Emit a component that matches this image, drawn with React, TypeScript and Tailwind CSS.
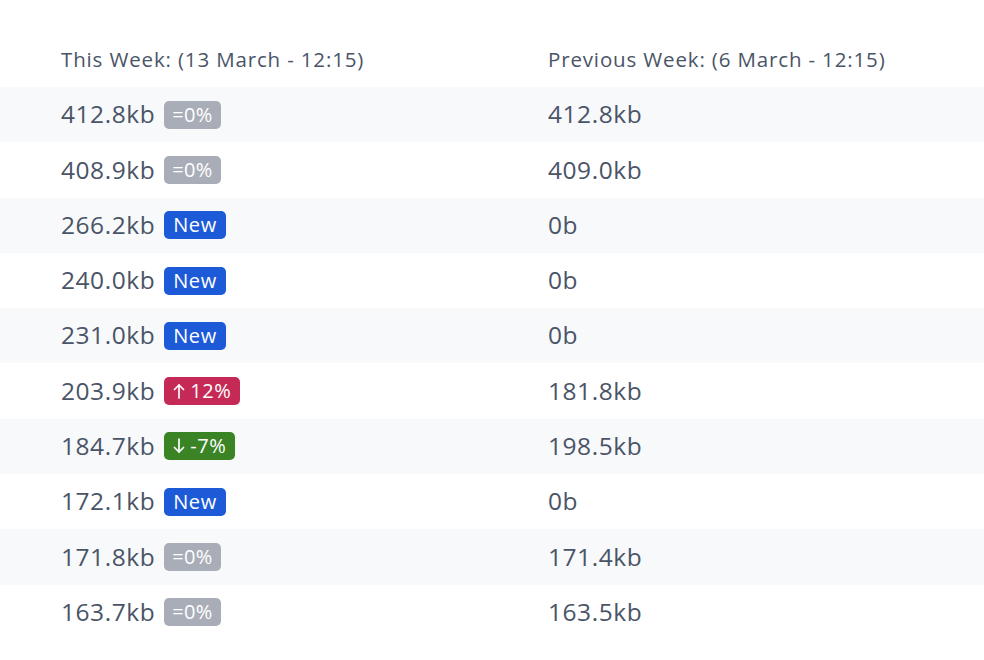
type Change =
  | { kind: 'same' }
  | { kind: 'new' }
  | { kind: 'up'; pct: number }
  | { kind: 'down'; pct: number }

type Row = { current: string; previous: string; change: Change }

const ROWS: Row[] = [
  { current: '412.8kb', previous: '412.8kb', change: { kind: 'same' } },
  { current: '408.9kb', previous: '409.0kb', change: { kind: 'same' } },
  { current: '266.2kb', previous: '0b', change: { kind: 'new' } },
  { current: '240.0kb', previous: '0b', change: { kind: 'new' } },
  { current: '231.0kb', previous: '0b', change: { kind: 'new' } },
  { current: '203.9kb', previous: '181.8kb', change: { kind: 'up', pct: 12 } },
  { current: '184.7kb', previous: '198.5kb', change: { kind: 'down', pct: -7 } },
  { current: '172.1kb', previous: '0b', change: { kind: 'new' } },
  { current: '171.8kb', previous: '171.4kb', change: { kind: 'same' } },
  { current: '163.7kb', previous: '163.5kb', change: { kind: 'same' } },
]

function Arrow({ up }: { up: boolean }) {
  return (
    <svg width="12" height="18" viewBox="0 0 12 18" fill="none" stroke="currentColor" strokeWidth="1.7" strokeLinecap="round" strokeLinejoin="round" className="mr-[5px]">
      {up ? (
        <>
          <path d="M6 16V3" />
          <path d="M1.5 7.5L6 3L10.5 7.5" />
        </>
      ) : (
        <>
          <path d="M6 2v13" />
          <path d="M1.5 10.5L6 15L10.5 10.5" />
        </>
      )}
    </svg>
  )
}

function Badge({ change }: { change: Change }) {
  const base = 'ml-[9px] inline-flex h-[28px] items-center rounded-[5px] text-[20px] leading-none text-white'
  if (change.kind === 'same') return <span className={`${base} bg-[#a9adb7] px-[8px] tracking-[0.3px]`}>=0%</span>
  if (change.kind === 'new') return <span className={`${base} bg-[#1d5ad8] px-[9px] font-medium tracking-[0.6px]`}>New</span>
  if (change.kind === 'up')
    return (
      <span className={`${base} bg-[#c52a56] px-[9px] font-medium tracking-[0.6px]`}>
        <Arrow up />
        {change.pct}%
      </span>
    )
  return (
    <span className={`${base} bg-[#3b8426] px-[9px] font-medium tracking-[0.6px]`}>
      <Arrow up={false} />
      {change.pct}%
    </span>
  )
}

export default function App() {
  return (
    <div className="min-h-[660px] w-[984px] bg-white pt-[43px] text-[#4a5467]" style={{ fontFamily: '"Open Sans", "Noto Sans", sans-serif' }}>
      <div className="grid grid-cols-[548px_1fr] pb-[12px] text-[20.5px] leading-[32px] tracking-[0.85px]">
        <div className="pl-[61px]">This Week: (13 March - 12:15)</div>
        <div>Previous Week: (6 March - 12:15)</div>
      </div>
      {ROWS.map((r, i) => (
        <div key={i} className={`grid h-[55.3px] grid-cols-[548px_1fr] items-center text-[24.5px] tracking-[0.55px] ${i % 2 === 0 ? 'bg-[#f8f9fb]' : 'bg-white'}`}>
          <div className="flex items-center pl-[61px]">
            <span>{r.current}</span>
            <Badge change={r.change} />
          </div>
          <div>{r.previous}</div>
        </div>
      ))}
    </div>
  )
}
